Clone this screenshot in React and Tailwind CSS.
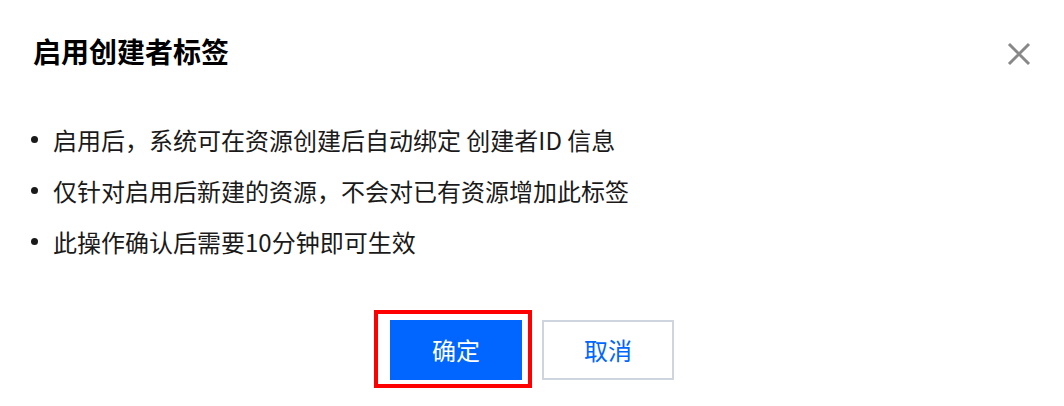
export default function App() {
  const items = [
    "启用后，系统可在资源创建后自动绑定 创建者ID 信息",
    "仅针对启用后新建的资源，不会对已有资源增加此标签",
    "此操作确认后需要10分钟即可生效",
  ];
  return (
    <div
      className="w-[1064px] h-[406px] bg-white flex flex-col overflow-hidden"
      style={{ fontFamily: '"Noto Sans CJK SC", "Noto Sans", sans-serif' }}
    >
      <div className="flex items-center justify-between pl-[33px] pr-[33px] pt-[32px]">
        <div className="text-[28px] leading-[38px] font-bold text-black">启用创建者标签</div>
        <svg width="24" height="24" viewBox="0 0 24 24" className="mt-[6px]">
          <path d="M2 2 L22 22 M22 2 L2 22" stroke="#888" strokeWidth="3" />
        </svg>
      </div>
      <ul className="mt-[44px] pl-[31px]">
        {items.map((t) => (
          <li key={t} className="flex items-center h-[51px] text-[24px] text-[#1a1a1a]">
            <span className="w-[7px] h-[7px] rounded-full bg-[#1a1a1a] mr-[15px]" />
            <span>{t}</span>
          </li>
        ))}
      </ul>
      <div className="flex justify-center gap-[20px] mt-[53px]">
        <div className="relative">
          <div className="absolute left-[-16px] top-[-10px] w-[158px] h-[78px] border-[4px] border-[#ff0000]" />
          <button className="w-[132px] h-[60px] bg-[#0066ff] text-white text-[24px]">确定</button>
        </div>
        <button className="w-[132px] h-[60px] bg-white border-2 border-[#cfd5de] text-[#0066ff] text-[24px]">取消</button>
      </div>
    </div>
  );
}
